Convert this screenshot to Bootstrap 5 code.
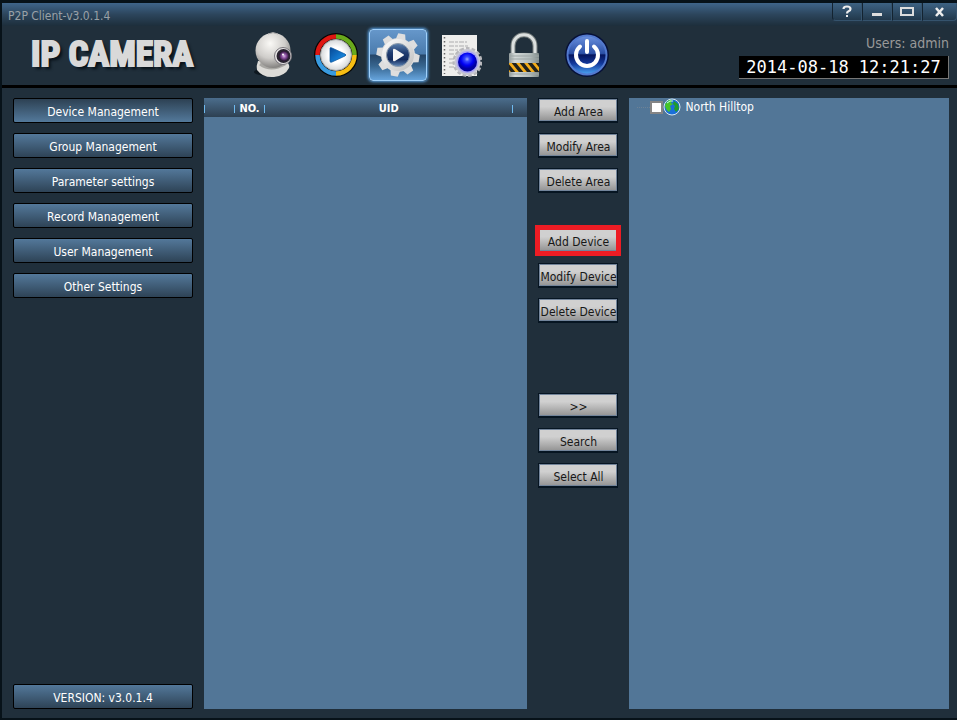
<!DOCTYPE html>
<html lang="en">
<head>
<meta charset="utf-8">
<meta name="viewport" content="width=device-width, initial-scale=1">
<title>P2P Client-v3.0.1.4</title>
<link href="https://cdn.jsdelivr.net/npm/bootstrap@5.3.0/dist/css/bootstrap.min.css" rel="stylesheet">
<style>
body { background: #202f3b; color: #fff; font-family: "DejaVu Sans Condensed", "DejaVu Sans", "Noto Sans", sans-serif; font-size: 12px; line-height: 16px; }
.client { border: solid #071219; border-width: 1px 0 2px 2px; border-top: 3px solid #071219; }
.titlebar { height: 23px; background: linear-gradient(#3f658a, #2c455c 50%, #1d2e3b); color: #99a1a7; }
.title-text { padding: 5px 0 0 6px; }
.win-btn { width: 30px; height: 18px; border: 1px solid #35536d; border-top: 0; border-left-color: #132330; background: linear-gradient(#3d6283, #22394c); padding: 0; display: flex; align-items: center; justify-content: center; }
.win-btn:first-child { border-radius: 0 0 0 4px; }
.win-btn:last-child { width: 35px; border-radius: 0 0 4px 0; }
.brandbar { height: 62px; border-bottom: 3px solid #000; padding-bottom: 2px; }
.brand-name { font: bold 35px/40px "Liberation Sans Narrow", "Roboto Condensed", Impact, sans-serif; color: #d9d9d9; -webkit-text-stroke: 2px #d9d9d9; text-shadow: 3px 3px 3px #071017; width: 223px; padding-left: 29px; white-space: nowrap; }
.tool { width: 63px; height: 56px; padding: 0; border: 0; background: none; display: flex; align-items: center; justify-content: center; }
.tool-on { width: 58px; height: 52px; margin: 0 2px; border: 1px solid #9fd0fb; border-radius: 4px; background: linear-gradient(#6697ca, #4a7bad 48%, #254567 50%, #37658f 72%, #66a4dd); box-shadow: 0 0 3px 1px #5aa1e3; }
.user-label { font-size: 14px; line-height: 18px; color: #999; }
.clock { background: #000; border: solid #777; border-width: 0 1px 1px 0; font: 17px/22px "DejaVu Sans Mono", "Liberation Mono", monospace; width: 210px; height: 23px; text-align: center; white-space: nowrap; }
.work { display: grid; grid-template-columns: 180px minmax(0, 81fr) 80px minmax(0, 80fr); column-gap: 11px; padding: 10px 8px 9px 11px; }
.stack { display: flex; flex-direction: column; row-gap: 10px; }
.side-btn { height: 25px; padding: 3px 0 0; border: 1px solid #000; border-radius: 2px; background: linear-gradient(#53789a, #2e4356); color: #fff; font-size: 12px; line-height: 16px; }
.side-btn.on { background: linear-gradient(#2d4153, #53799b); }
.pane { background: #527697; }
.uid-head th { height: 19px; padding: 2px 0 0; font-size: 11px; line-height: 16px; text-align: center; background: linear-gradient(#4b6d8c, #2d4052); }
.uid-head span { display: block; height: 8px; line-height: 8px; border-right: 1px solid #6eb9ee; }
.uid-head th:first-child span { border-left: 1px solid #6eb9ee; }
.act-btn { width: 80px; height: 25px; padding: 3px 0 0; border: 1px solid #061522; border-bottom-width: 2px; border-radius: 0; background: linear-gradient(#d0d0d0 35%, #929292); box-shadow: inset 0 0 0 1px #72849a; color: #171717; font-size: 12px; line-height: 16px; white-space: nowrap; }
.marked { outline: 5px solid #ed1c24; outline-offset: -2px; }
.group-gap { height: 15px; }
.group-gap-lg { height: 50px; }
.tree-root { height: 18px; padding-left: 8px; }
.tree-line { width: 13px; border-top: 1px dotted #6d8296; }
.tree-check { appearance: none; width: 13px; height: 13px; margin: 0; border: 2px solid #858585; background: #fff; }
.tree-check:checked { background: #286ea8; }
</style>
<script src="https://cdn.jsdelivr.net/npm/bootstrap@5.3.0/dist/js/bootstrap.bundle.min.js"></script>
</head>
<body>
<div class="client min-vh-100 d-flex flex-column">
  <header>
    <div class="titlebar d-flex justify-content-between align-items-start">
      <span class="title-text">P2P Client-v3.0.1.4</span>
      <div class="d-flex">
        <button class="win-btn" type="button" aria-label="Help"><svg width="12" height="13" viewBox="0 0 12 13"><path d="M2.500 4Q2.500 1.500 6 1.500T9.500 4Q9.500 5.500 7.500 6.200Q6 6.800 6 8.500" fill="none" stroke="#eee" stroke-width="2.200"/><path d="M5 10h2v2H5z" fill="#eee"/></svg></button>
        <button class="win-btn" type="button" aria-label="Minimize"><svg width="12" height="12"><path d="M1 7h10v3H1z" fill="#ddd"/></svg></button>
        <button class="win-btn" type="button" aria-label="Maximize"><svg width="14" height="10"><path d="M1 1h12v7H1z" fill="none" stroke="#ddd" stroke-width="2"/></svg></button>
        <button class="win-btn" type="button" aria-label="Close"><svg width="11" height="10"><path d="M2 1l7 8M9 1L2 9" stroke="#eee" stroke-width="2.500"/></svg></button>
      </div>
    </div>
    <div class="brandbar d-flex align-items-center">
      <div class="brand-name">IP CAMERA</div>
      <nav class="d-flex align-items-center ms-3" aria-label="Main">
        <button class="tool" type="button" aria-label="Live view">
          <svg width="44" height="48" viewBox="0 0 44 48"><defs><radialGradient id="ball" cx=".42" cy=".3" r=".7"><stop offset="0" stop-color="#faf9f6"/><stop offset=".6" stop-color="#cfcdca"/><stop offset="1" stop-color="#858381"/></radialGradient><radialGradient id="lens"><stop offset="0" stop-color="#d8b8e4"/><stop offset=".45" stop-color="#8c50a0"/><stop offset="1" stop-color="#25122f"/></radialGradient></defs><ellipse cx="19" cy="41" rx="16" ry="4" fill="#0d171f"/><path d="M7 30Q5 35 6 39Q12 47 23 46Q34 45 38 37Q39 34 36 31Z" fill="#dddcd8"/><path d="M9 33Q20 41 34 33" fill="none" stroke="#a8a7a3" stroke-width="3"/><circle cx="22" cy="19.500" r="17.500" fill="url(#ball)"/><path d="M17 3q5-3 10 0" stroke="#aaa" fill="none"/><circle cx="32" cy="25" r="8.500" fill="#e8e6e6" stroke="#77747a"/><circle cx="32.500" cy="25" r="7" fill="#292330"/><circle cx="33" cy="25" r="5" fill="url(#lens)"/><circle cx="32" cy="23.500" r="1" fill="#fff"/></svg>
        </button>
        <button class="tool" type="button" aria-label="Playback">
          <svg width="44" height="44" viewBox="0 0 44 44"><defs><linearGradient id="play" x2="1" y2="1"><stop stop-color="#084895"/><stop offset="1" stop-color="#1a9af5"/></linearGradient><radialGradient id="dial"><stop offset=".5" stop-color="#fff"/><stop offset="1" stop-color="#d3d6d8"/></radialGradient></defs><circle cx="22" cy="22" r="22" fill="#050505"/><g fill="none" stroke-width="4.500"><path d="M22 3.500A18.500 18.500 0 0 0 3.500 22" stroke="#de1712"/><path d="M22 3.500A18.500 18.500 0 0 1 40.500 22" stroke="#69a91c"/><path d="M3.500 22A18.500 18.500 0 0 0 22 40.500" stroke="#399be0"/><path d="M22 40.500A18.500 18.500 0 0 0 40.500 22" stroke="#f6bd13"/></g><circle cx="22" cy="22" r="15.500" fill="url(#dial)" stroke="#aaa"/><path d="M16 15.500Q16 14 18 15L31 21Q33 22 31 23L18 29Q16 30 16 28Z" fill="url(#play)" stroke="#07539b" stroke-width=".7"/></svg>
        </button>
        <button class="tool tool-on" type="button" aria-label="Settings" aria-pressed="true">
          <svg width="46" height="46" viewBox="0 0 46 46"><defs><linearGradient id="steel" x2="1" y2="1"><stop stop-color="#fff"/><stop offset="1" stop-color="#bdbdbd"/></linearGradient><linearGradient id="hub" x2="0" y2="1"><stop stop-color="#5a80ae"/><stop offset=".4" stop-color="#203c70"/><stop offset=".7" stop-color="#122a5c"/><stop offset="1" stop-color="#6289b9"/></linearGradient></defs><g fill="#dedede" transform="rotate(10 23 23)"><circle cx="23" cy="23" r="17"/><path id="tooth" d="M18 8L19.500 1.500h7L28 8z"/><use href="#tooth" transform="rotate(45 23 23)"/><use href="#tooth" transform="rotate(90 23 23)"/><use href="#tooth" transform="rotate(135 23 23)"/><use href="#tooth" transform="rotate(180 23 23)"/><use href="#tooth" transform="rotate(225 23 23)"/><use href="#tooth" transform="rotate(270 23 23)"/><use href="#tooth" transform="rotate(315 23 23)"/></g><circle cx="23" cy="23" r="16" fill="url(#steel)"/><circle cx="23" cy="23" r="11.500" fill="url(#hub)" stroke="#8d9cac"/><path d="M18 18q0-2 2-1l8 5q2 1 0 2l-8 5q-2 1-2-1z" fill="#f5f5f5"/></svg>
        </button>
        <button class="tool" type="button" aria-label="Logs">
          <svg width="42" height="46" viewBox="0 0 42 46"><defs><radialGradient id="blueball" cx=".48" cy=".35"><stop stop-color="#9eaaff"/><stop offset=".25" stop-color="#3749ff"/><stop offset=".65" stop-color="#0000f3"/><stop offset="1" stop-color="#0000a0"/></radialGradient></defs><path d="M2 3h35v41H2z" fill="#eeeeec"/><path d="M4.500 5v37" stroke="#666" stroke-width="1.500" stroke-dasharray="1.500 2.500"/><path d="M9 10h18M9 14h20M9 18h14M9 22h10M9 27h9M9 31h7M9 35h6" stroke="#c2c2c2" stroke-width="1.300" stroke-dasharray="5 1 3 1"/><circle cx="27.500" cy="30" r="13" fill="none" stroke="#b8b8bb" stroke-width="4" stroke-dasharray="3.400 2"/><circle cx="27.500" cy="30" r="13" fill="#c7c7d3"/><circle cx="27.500" cy="30" r="11" fill="#aaa6f4"/><circle cx="27.500" cy="30" r="9.500" fill="url(#blueball)"/></svg>
        </button>
        <button class="tool" type="button" aria-label="Lock">
          <svg width="34" height="46" viewBox="0 0 34 46"><defs><linearGradient id="body"><stop stop-color="#929b9b"/><stop offset=".2" stop-color="#d3d8d7"/><stop offset=".7" stop-color="#b1bbba"/><stop offset="1" stop-color="#7e8988"/></linearGradient><clipPath id="band"><path d="M2 31h30v9H2z"/></clipPath></defs><path d="M6 24V14C6-1 28-1 28 14v10" fill="none" stroke="#737b7b" stroke-width="5"/><path d="M6 24V14C6-1 28-1 28 14v10" fill="none" stroke="#dce0df" stroke-width="3"/><rect x="2" y="21" width="30" height="24" rx="1" fill="url(#body)"/><path d="M2 24h30M2 27h30M2 42h30" stroke="#9da6a5"/><g clip-path="url(#band)"><path d="M2 31h30v9H2z" fill="#f4ac19"/><path d="M-2 30l9 11M6 30l9 11M14 30l9 11M22 30l9 11M30 30l9 11" stroke="#20221f" stroke-width="3.500"/></g></svg>
        </button>
        <button class="tool" type="button" aria-label="Power">
          <svg width="44" height="46" viewBox="0 0 44 46"><defs><linearGradient id="power" x2="0" y2="1"><stop stop-color="#6c92df"/><stop offset=".46" stop-color="#2b50a7"/><stop offset=".5" stop-color="#05155d"/><stop offset=".72" stop-color="#12389c"/><stop offset="1" stop-color="#4da8f6"/></linearGradient></defs><circle cx="22" cy="23" r="22" fill="#061037"/><circle cx="22" cy="23" r="19.500" fill="url(#power)" stroke="#5279ce" stroke-width="2"/><path d="M15 14.500A11 11 0 1 0 29 14.500M22 9v11" stroke="#fff" stroke-width="4" stroke-linecap="round" fill="none"/></svg>
        </button>
      </nav>
      <div class="ms-auto me-2 pt-1 d-flex flex-column align-items-end">
        <span class="user-label">Users: admin</span>
        <time class="clock mt-1" datetime="2014-08-18T12:21:27">2014-08-18 12:21:27</time>
      </div>
    </div>
  </header>
  <main class="work flex-grow-1">
    <nav class="d-flex flex-column" aria-label="Settings sections">
      <div class="stack">
        <button class="side-btn on" type="button">Device Management</button>
        <button class="side-btn" type="button">Group Management</button>
        <button class="side-btn" type="button">Parameter settings</button>
        <button class="side-btn" type="button">Record Management</button>
        <button class="side-btn" type="button">User Management</button>
        <button class="side-btn" type="button">Other Settings</button>
      </div>
      <button class="side-btn mt-auto" type="button">VERSION: v3.0.1.4</button>
    </nav>
    <section class="pane" aria-label="Devices found">
      <table class="w-100">
        <colgroup><col width="31"><col width="30"><col><col width="14"></colgroup>
        <thead class="uid-head"><tr><th><span></span></th><th><span>NO.</span></th><th><span>UID</span></th><th></th></tr></thead>
        <tbody></tbody>
      </table>
    </section>
    <div class="stack">
      <button class="act-btn" type="button">Add Area</button>
      <button class="act-btn" type="button">Modify Area</button>
      <button class="act-btn" type="button">Delete Area</button>
      <div class="group-gap"></div>
      <button class="act-btn marked" type="button">Add Device</button>
      <button class="act-btn" type="button">Modify Device</button>
      <button class="act-btn" type="button">Delete Device</button>
      <div class="group-gap-lg"></div>
      <button class="act-btn" type="button">&gt;&gt;</button>
      <button class="act-btn" type="button">Search</button>
      <button class="act-btn" type="button">Select All</button>
    </div>
    <section class="pane" aria-label="Areas">
      <div class="tree-root d-flex align-items-center">
        <span class="tree-line"></span>
        <input class="tree-check" type="checkbox" id="area">
        <label class="d-flex align-items-center" for="area">
          <svg class="me-1" width="18" height="18" viewBox="0 0 18 18"><circle cx="9" cy="9" r="8" fill="#1a6fd8" stroke="#d9e8ef"/><path d="M3 5Q6 1 9 2L8 5L10 6L7 8L8 11L6 14Q2 11 2 7Z" fill="#46c528"/><path d="M11 3l4 3 1 5-3 3-2-3 1-3-2-2z" fill="#1f9c2c"/><path d="M4 5q3-3 6-2" stroke="#c6ffe5" fill="none"/></svg>North Hilltop
        </label>
      </div>
    </section>
  </main>
</div>
</body>
</html>
